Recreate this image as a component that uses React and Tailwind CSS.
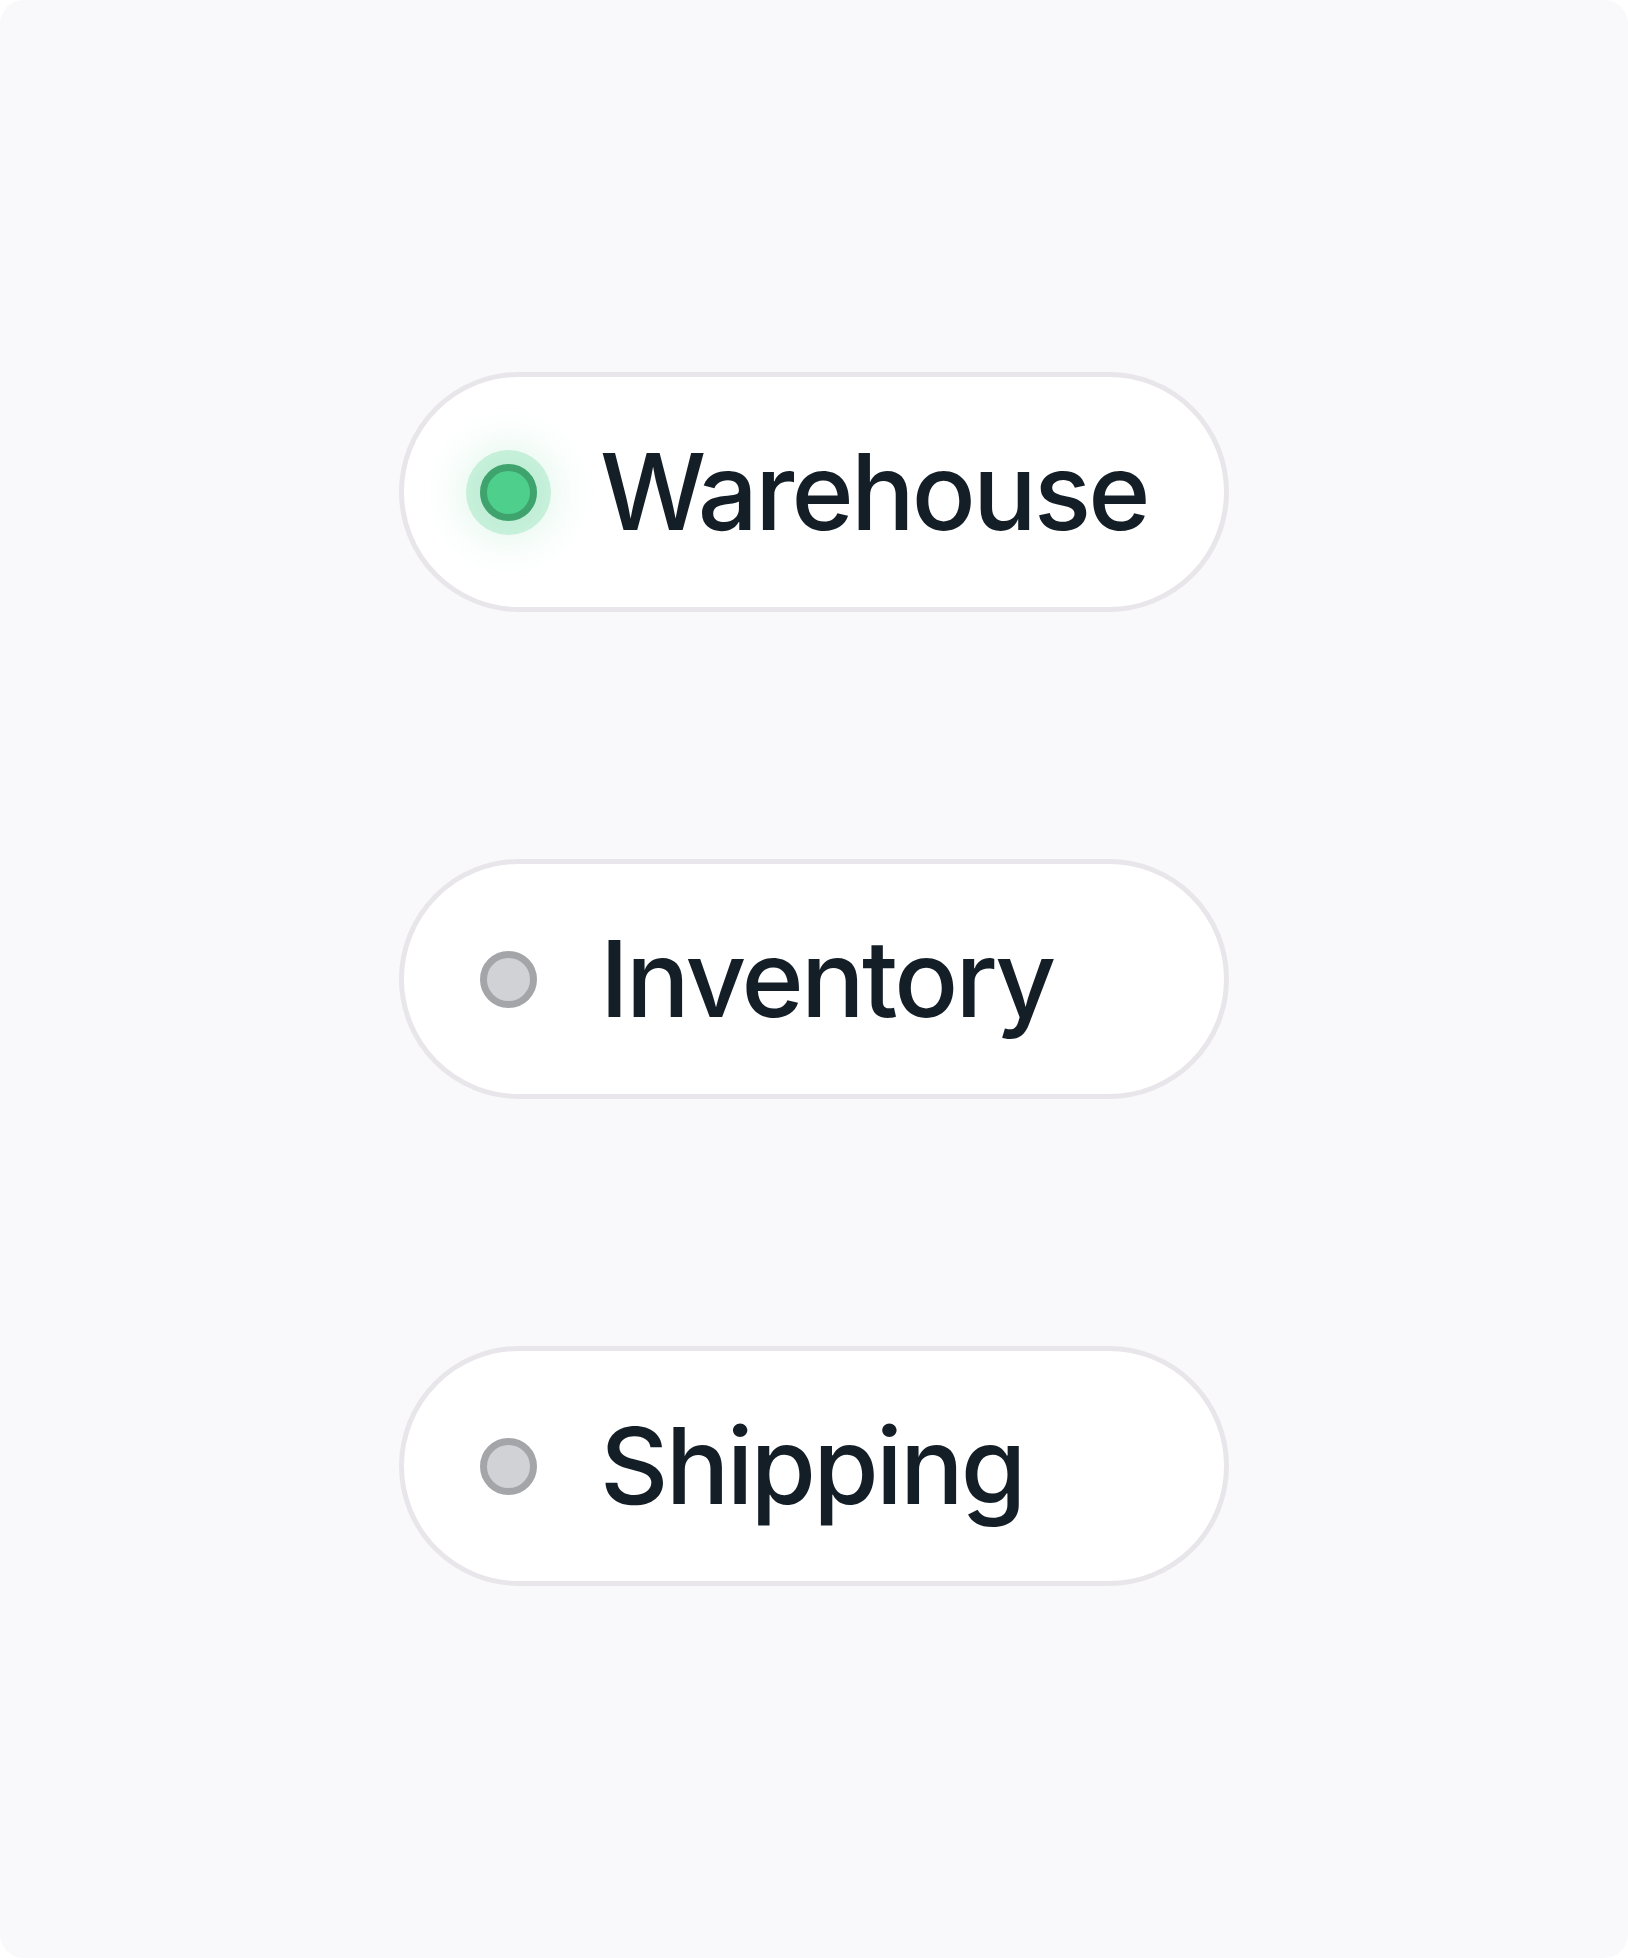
import React from "react";

const items = [
  { label: "Warehouse", active: true },
  { label: "Inventory", active: false },
  { label: "Shipping", active: false },
];

function StatusPill({ label, active }) {
  return (
    <div className="flex items-center w-[830px] h-[240px] rounded-full border-[5px] border-[#e8e6ea] bg-white pl-[76px]">
      {active ? (
        <span className="block w-[57px] h-[57px] rounded-full bg-[#4fcf8c] border-[7px] border-[#3ea36c] shadow-[0_0_0_14px_rgba(79,207,140,0.26),0_0_40px_22px_rgba(79,207,140,0.14)]" />
      ) : (
        <span className="block w-[57px] h-[57px] rounded-full bg-[#d1d2d6] border-[7px] border-[#a4a5a9]" />
      )}
      <span
        className="ml-[63px] text-[106px] leading-none font-medium text-[#131e27] tracking-[-2.8px]"
        style={{ fontFamily: "Inter, 'Noto Sans', sans-serif" }}
      >
        {label}
      </span>
    </div>
  );
}

export default function App() {
  return (
    <div className="w-[1628px] h-[1958px] bg-white">
      <div className="w-full h-full rounded-[24px] bg-[#f9f8fb] flex flex-col items-center justify-center gap-[247px]">
        {items.map((it) => (
          <StatusPill key={it.label} {...it} />
        ))}
      </div>
    </div>
  );
}
